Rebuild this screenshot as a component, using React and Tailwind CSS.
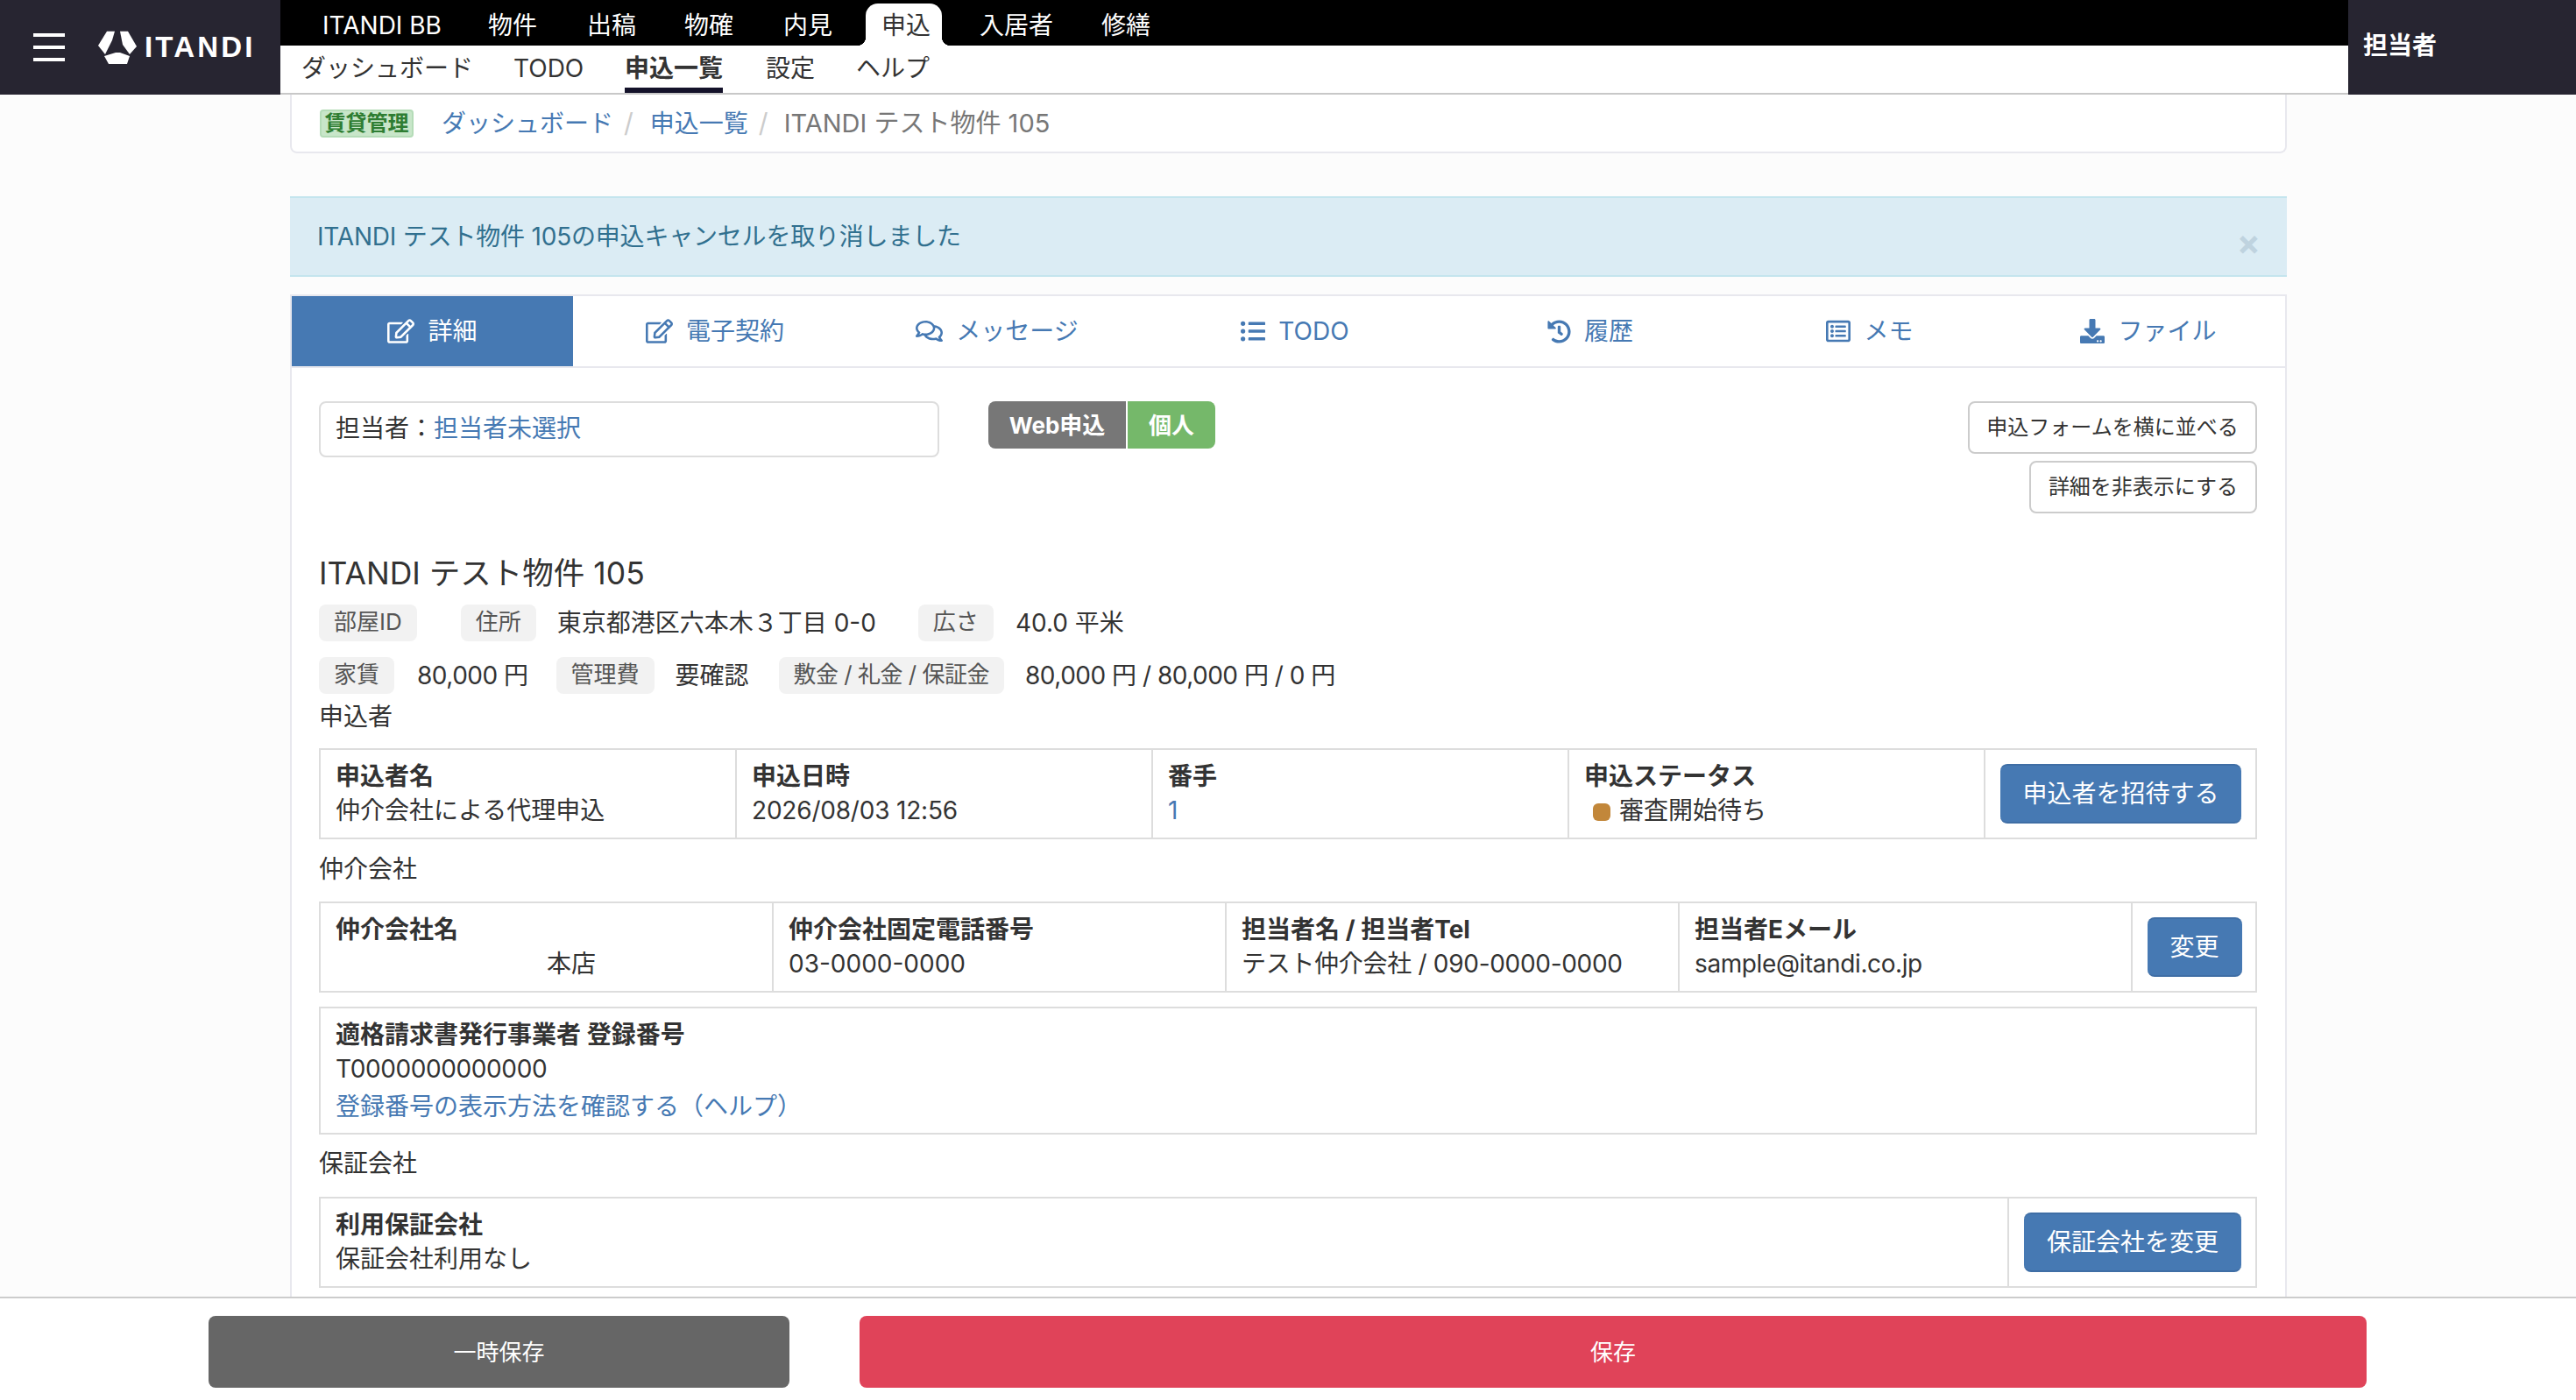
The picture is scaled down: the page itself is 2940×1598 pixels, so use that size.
import React from 'react';
import { FaRegEdit, FaRegComments, FaListUl, FaHistory, FaRegListAlt, FaDownload } from 'react-icons/fa';

const subItems = [
  { label: 'ダッシュボード', className: 'w-[242px]' },
  { label: 'TODO', className: 'w-[127px]' },
  { label: '申込一覧', className: 'w-[161px]', current: true },
  { label: '設定', className: 'w-[103px]' },
  { label: 'ヘルプ', className: 'w-[100px]' },
];

const tabs = [
  { label: '詳細', icon: FaRegEdit, active: true, className: 'w-[321px]', iconClass: 'w-[31px] h-[28px]' },
  { label: '電子契約', icon: FaRegEdit, className: 'w-[324px]', iconClass: 'w-[31px] h-[28px]' },
  { label: 'メッセージ', icon: FaRegComments, className: 'w-[320px]', iconClass: 'w-[31px] h-[28px]' },
  { label: 'TODO', icon: FaListUl, className: 'w-[360px]', iconClass: 'w-[28px] h-[28px]' },
  { label: '履歴', icon: FaHistory, className: 'w-[314px]', iconClass: 'w-[27px] h-[27px]' },
  { label: 'メモ', icon: FaRegListAlt, className: 'w-[324px]', iconClass: 'w-[28px] h-[28px]' },
  { label: 'ファイル', icon: FaDownload, className: 'flex-1', iconClass: 'w-[28px] h-[28px]' },
];

function Logo() {
  return (
    <svg viewBox="0 0 44 38" className="w-[44px] h-[38px] fill-white">
      <polygon points="10,0.7 19,0.7 16,11 8,27 0,17" />
      <polygon points="25,0.7 34,0.7 44,18 36,27 28,16" />
      <polygon points="7,29 20,25 25,25 36,29 33,38 12,38" />
    </svg>
  );
}

function Tag({ children, className = '' }) {
  return (
    <span className={`block h-[42px] px-[17px] rounded-lg bg-[#f2f2f2] text-[#555555] text-[26px] leading-[40px] whitespace-nowrap ${className}`}>
      {children}
    </span>
  );
}

function Cell({ label, className = '', children }) {
  return (
    <div className={`px-[17px] py-[10px] border-r-2 border-[#dddddd] ${className}`}>
      <div className="font-bold leading-[40px] whitespace-nowrap">{label}</div>
      <div className="-mt-[1px] leading-[40px] whitespace-nowrap">{children}</div>
    </div>
  );
}

function BlueButton({ children, className = '' }) {
  return (
    <button className={`h-[68px] rounded-lg bg-[#4679b3] border-y-2 border-[#3f6ea5] text-white text-[28px] whitespace-nowrap ${className}`}>
      {children}
    </button>
  );
}

function WhiteButton({ children, className = '' }) {
  return (
    <button className={`h-[60px] rounded-lg bg-white border-2 border-[#cccccc] text-[24px] text-[#333333] whitespace-nowrap ${className}`}>
      {children}
    </button>
  );
}

export default function App() {
  return (
    <div className="h-screen flex flex-col overflow-hidden bg-[#fcfcfc] text-[#333333] text-[28px] font-['Inter','Noto_Sans_CJK_JP',sans-serif]">
      <header className="flex h-[108px] shrink-0">
        <div className="w-[320px] bg-[#272531] flex items-center pl-[38px]">
          <div className="w-[36px] flex flex-col gap-[10px] mr-[38px]">
            <span className="h-[4px] bg-white" />
            <span className="h-[4px] bg-white" />
            <span className="h-[4px] bg-white" />
          </div>
          <Logo />
          <span className="ml-[9px] text-white font-bold text-[33px] tracking-[3.2px] font-['Liberation_Sans',sans-serif]">ITANDI</span>
        </div>
        <div className="flex-1 flex flex-col">
          <nav className="h-[52px] bg-black flex items-end pl-[48px] text-white">
            <span className="h-[48px] w-[189px] leading-[50px] whitespace-nowrap">ITANDI BB</span>
            <span className="h-[48px] w-[113px] leading-[50px]">物件</span>
            <span className="h-[48px] w-[111px] leading-[50px]">出稿</span>
            <span className="h-[48px] w-[113px] leading-[50px]">物確</span>
            <span className="h-[48px] w-[94px] leading-[50px]">内見</span>
            <span className="relative h-[48px] w-[87px] mr-[43px] pl-[18px] leading-[50px] bg-white text-[#333333] rounded-t-[14px]">
              <span className="absolute -left-[10px] bottom-0 w-[10px] h-[10px] bg-[radial-gradient(circle_at_0_0,#000_10px,#fff_10.5px)]" />
              <span className="absolute -right-[10px] bottom-0 w-[10px] h-[10px] bg-[radial-gradient(circle_at_100%_0,#000_10px,#fff_10.5px)]" />
              申込
            </span>
            <span className="h-[48px] w-[139px] leading-[50px]">入居者</span>
            <span className="h-[48px] leading-[50px]">修繕</span>
          </nav>
          <nav className="h-[56px] bg-white border-b-2 border-[#c8c8c8] flex pl-[24px] text-[#333333]">
            {subItems.map((item) => (
              <div key={item.label} className={`${item.className} h-[54px]`}>
                <span className={`block w-fit h-[54px] leading-[52px] whitespace-nowrap ${item.current ? 'font-bold border-b-[6px] border-[#14122a]' : ''}`}>
                  {item.label}
                </span>
              </div>
            ))}
          </nav>
        </div>
        <div className="w-[260px] bg-[#272531] pl-[17px] text-white font-bold leading-[104px]">担当者</div>
      </header>

      <main className="flex-1 min-h-0 overflow-hidden ml-[331px] w-[2279px]">
        <div className="h-[67px] bg-white border-x-2 border-b-2 border-[#e8e8ee] rounded-b-lg flex items-center pl-[32px] whitespace-nowrap">
          <span className="h-[32px] w-[107px] rounded bg-[#c8e6c9] border-2 border-[#b5dcb8] text-[#2e7d32] text-[24px] leading-[27px] font-bold text-center">賃貸管理</span>
          <a className="ml-[32px] text-[#4679b3]">ダッシュボード</a>
          <span className="ml-[12px] mr-[19px] text-[#cccccc] text-[30px]">/</span>
          <a className="text-[#4679b3]">申込一覧</a>
          <span className="ml-[12px] mr-[18px] text-[#cccccc] text-[30px]">/</span>
          <span className="text-[#777777] text-[29px]">ITANDI テスト物件 105</span>
        </div>

        <div className="mt-[49px] h-[92px] bg-[#dbecf4] border-y-2 border-[#c4e5ee] flex items-center justify-between pl-[31px] pr-[30px] text-[#31708f]">
          <span className="tracking-[-0.2px]">ITANDI テスト物件 105の申込キャンセルを取り消しました</span>
          <span className="mt-[14px] text-[40px] font-bold text-[#bfd3df]">×</span>
        </div>

        <section className="mt-[20px] bg-white border-x-2 border-t-2 border-[#e8e8ee] h-[1200px]">
          <div className="flex h-[82px] border-b-2 border-[#e8e8ee]">
            {tabs.map((tab) => (
              <div
                key={tab.label + tab.className}
                className={`${tab.className} flex items-center justify-center gap-[15px] ${tab.active ? 'bg-[#4679b3] text-white' : 'text-[#4679b3]'}`}
              >
                <tab.icon className={tab.iconClass} />
                <span>{tab.label}</span>
              </div>
            ))}
          </div>

          <div className="pl-[31px] pr-[32px] pt-[38px]">
            <div className="flex items-start h-[128px]">
              <div className="w-[708px] h-[64px] border-2 border-[#dddddd] rounded-lg pl-[17px] leading-[58px]">
                担当者：<a className="text-[#4679b3]">担当者未選択</a>
              </div>
              <div className="ml-[56px] h-[54px] flex text-white text-[26px] font-bold leading-[55px]">
                <span className="w-[157px] text-center bg-[#777777] rounded-l-lg">Web申込</span>
                <span className="w-[100px] ml-[2px] text-center bg-[#75b86a] rounded-r-lg">個人</span>
              </div>
              <div className="ml-auto flex flex-col items-end gap-[8px]">
                <WhiteButton className="w-[330px]">申込フォームを横に並べる</WhiteButton>
                <WhiteButton className="w-[260px]">詳細を非表示にする</WhiteButton>
              </div>
            </div>

            <h1 className="mt-[44px] h-[50px] text-[35.5px] leading-[50px] whitespace-nowrap">ITANDI テスト物件 105</h1>

            <div className="mt-[10px] flex items-center h-[42px]">
              <Tag>部屋ID</Tag>
              <span className="ml-[50px]"><Tag>住所</Tag></span>
              <span className="ml-[24px] whitespace-nowrap">東京都港区六本木３丁目 0-0</span>
              <span className="ml-[48px]"><Tag>広さ</Tag></span>
              <span className="ml-[25px] whitespace-nowrap">40.0 平米</span>
            </div>
            <div className="mt-[18px] flex items-center h-[42px]">
              <Tag>家賃</Tag>
              <span className="ml-[26px] whitespace-nowrap tracking-[-0.5px]">80,000 円</span>
              <span className="ml-[32px]"><Tag>管理費</Tag></span>
              <span className="ml-[24px] whitespace-nowrap">要確認</span>
              <span className="ml-[34px]"><Tag className="tracking-[-0.5px]">敷金 / 礼金 / 保証金</Tag></span>
              <span className="ml-[24px] whitespace-nowrap tracking-[-0.5px]">80,000 円 / 80,000 円 / 0 円</span>
            </div>

            <div className="mt-[6px] mb-[16px] leading-[40px]">申込者</div>
            <div className="flex h-[104px] border-2 border-[#dddddd]">
              <Cell label="申込者名" className="w-[475px]">仲介会社による代理申込</Cell>
              <Cell label="申込日時" className="w-[475px]"><span className="tracking-[-0.2px]">2026/08/03 12:56</span></Cell>
              <Cell label="番手" className="w-[475px]"><a className="text-[#4679b3]">1</a></Cell>
              <Cell label="申込ステータス" className="w-[475px]">
                <span className="inline-block align-[-2px] w-[20px] h-[20px] mx-[10px] rounded-md bg-[#c2873a]" />
                審査開始待ち
              </Cell>
              <div className="flex-1 flex items-center justify-center pl-[1px]">
                <BlueButton className="w-[275px]">申込者を招待する</BlueButton>
              </div>
            </div>

            <div className="mt-[14px] mb-[17px] leading-[40px]">仲介会社</div>
            <div className="flex h-[104px] border-2 border-[#dddddd]">
              <Cell label="仲介会社名" className="w-[517px]"><span className="ml-[241px]">本店</span></Cell>
              <Cell label="仲介会社固定電話番号" className="w-[517px]">03-0000-0000</Cell>
              <Cell label="担当者名 / 担当者Tel" className="w-[517px]"><span className="tracking-[-0.3px]">テスト仲介会社 / 090-0000-0000</span></Cell>
              <Cell label="担当者Eメール" className="w-[517px]"><span className="tracking-[-0.4px]">sample@itandi.co.jp</span></Cell>
              <div className="flex-1 flex items-center justify-center pl-[1px]">
                <BlueButton className="w-[108px]">変更</BlueButton>
              </div>
            </div>

            <div className="mt-[16px] h-[146px] border-2 border-[#dddddd] px-[17px] py-[10px]">
              <div className="font-bold leading-[40px]">適格請求書発行事業者 登録番号</div>
              <div className="-mt-[1px] leading-[40px] tracking-[-0.4px]">T0000000000000</div>
              <a className="block mt-[3px] leading-[40px] text-[#4679b3]">登録番号の表示方法を確認する（ヘルプ）</a>
            </div>

            <div className="mt-[13px] mb-[18px] leading-[40px]">保証会社</div>
            <div className="flex h-[104px] border-2 border-[#dddddd]">
              <Cell label="利用保証会社" className="w-[1927px]">保証会社利用なし</Cell>
              <div className="flex-1 flex items-center justify-center pl-[1px]">
                <BlueButton className="w-[248px]">保証会社を変更</BlueButton>
              </div>
            </div>
          </div>
        </section>
      </main>

      <footer className="h-[118px] shrink-0 bg-white border-t-2 border-[#cccccc] pt-[20px] pl-[238px] flex">
        <button className="w-[663px] h-[82px] rounded-lg bg-[#666666] text-white text-[26px]">一時保存</button>
        <button className="ml-[80px] w-[1720px] h-[82px] rounded-lg bg-[#e04359] text-white text-[26px]">保存</button>
      </footer>
    </div>
  );
}
